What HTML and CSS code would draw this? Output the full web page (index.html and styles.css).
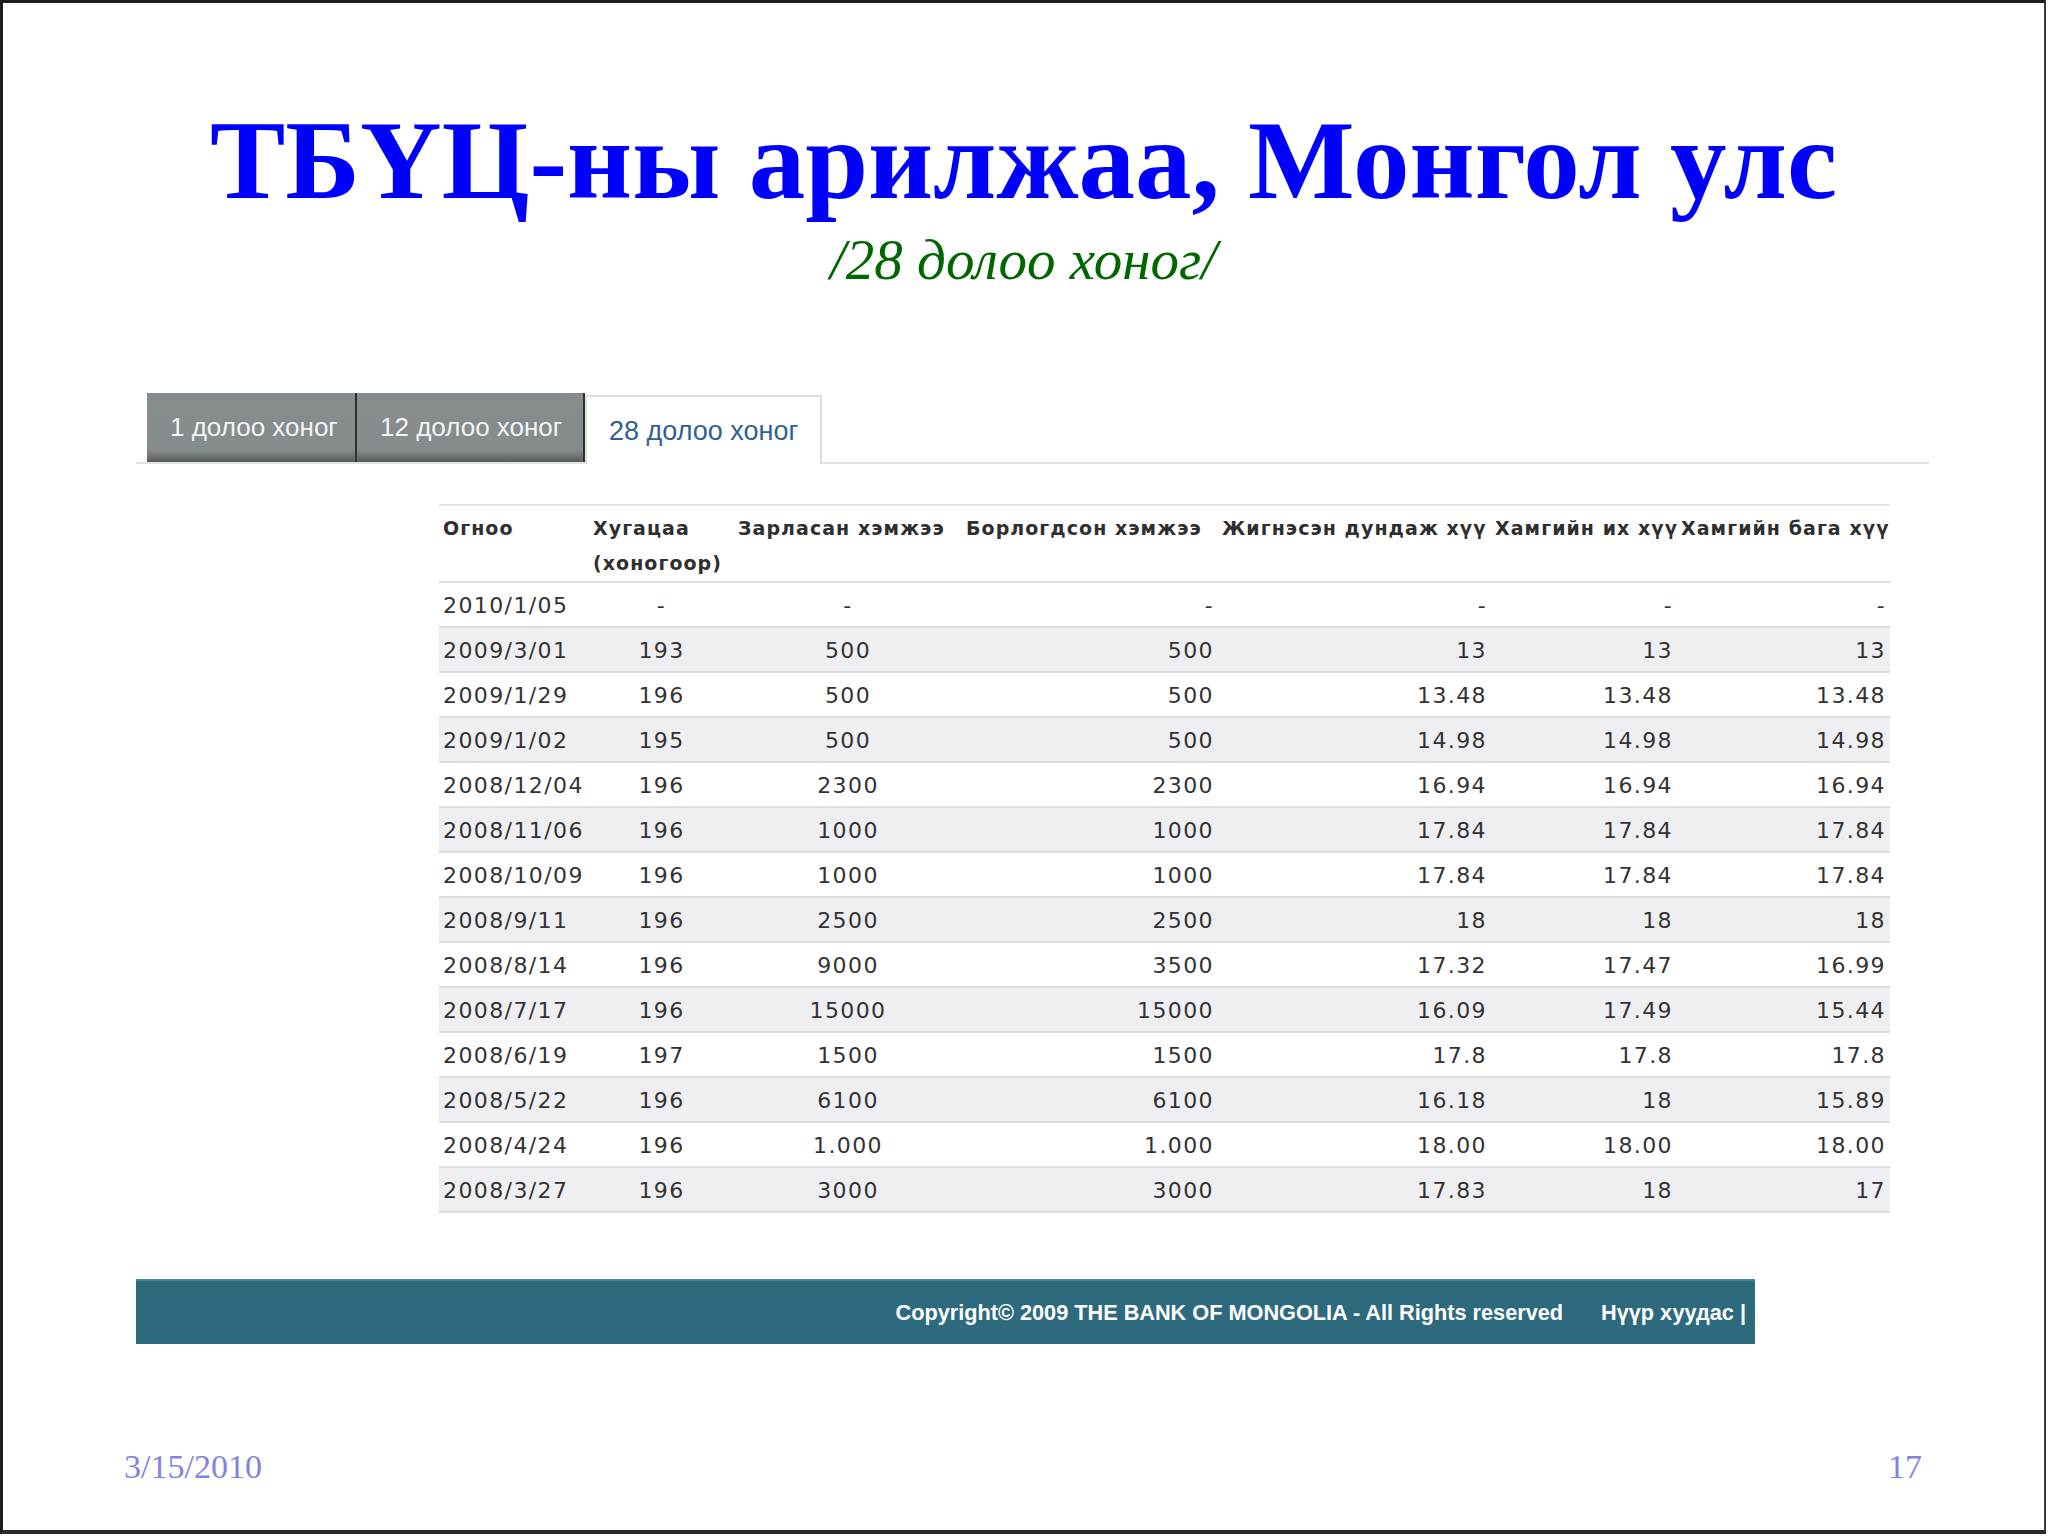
FILE: index.html
```html
<!DOCTYPE html>
<html lang="mn">
<head>
<meta charset="utf-8">
<title>ТБҮЦ-ны арилжаа, Монгол улс</title>
<link rel="stylesheet" href="styles.css">
</head>
<body>
<div class="slide">
  <h1 class="title">ТБҮЦ-ны арилжаа, Монгол улс</h1>
  <div class="subtitle">/28 долоо хоног/</div>

  <div class="content">
    <div class="tabs">
      <div class="tab">1 долоо хоног</div>
      <div class="tab">12 долоо хоног</div>
      <div class="tab active">28 долоо хоног</div>
    </div>

    <table class="data">
      <colgroup>
        <col class="c1"><col class="c2"><col class="c3"><col class="c4"><col class="c5"><col class="c6"><col class="c7">
      </colgroup>
      <thead>
        <tr>
          <th>Огноо</th>
          <th>Хугацаа<br>(хоногоор)</th>
          <th>Зарласан хэмжээ</th>
          <th>Борлогдсон хэмжээ</th>
          <th>Жигнэсэн дундаж хүү</th>
          <th>Хамгийн их хүү</th>
          <th>Хамгийн бага хүү</th>
        </tr>
      </thead>
      <tbody>
        <tr><td>2010/1/05</td><td class="ctr">-</td><td class="ctr">-</td><td class="r">-</td><td class="r">-</td><td class="r">-</td><td class="r">-</td></tr>
        <tr><td>2009/3/01</td><td class="ctr">193</td><td class="ctr">500</td><td class="r">500</td><td class="r">13</td><td class="r">13</td><td class="r">13</td></tr>
        <tr><td>2009/1/29</td><td class="ctr">196</td><td class="ctr">500</td><td class="r">500</td><td class="r">13.48</td><td class="r">13.48</td><td class="r">13.48</td></tr>
        <tr><td>2009/1/02</td><td class="ctr">195</td><td class="ctr">500</td><td class="r">500</td><td class="r">14.98</td><td class="r">14.98</td><td class="r">14.98</td></tr>
        <tr><td>2008/12/04</td><td class="ctr">196</td><td class="ctr">2300</td><td class="r">2300</td><td class="r">16.94</td><td class="r">16.94</td><td class="r">16.94</td></tr>
        <tr><td>2008/11/06</td><td class="ctr">196</td><td class="ctr">1000</td><td class="r">1000</td><td class="r">17.84</td><td class="r">17.84</td><td class="r">17.84</td></tr>
        <tr><td>2008/10/09</td><td class="ctr">196</td><td class="ctr">1000</td><td class="r">1000</td><td class="r">17.84</td><td class="r">17.84</td><td class="r">17.84</td></tr>
        <tr><td>2008/9/11</td><td class="ctr">196</td><td class="ctr">2500</td><td class="r">2500</td><td class="r">18</td><td class="r">18</td><td class="r">18</td></tr>
        <tr><td>2008/8/14</td><td class="ctr">196</td><td class="ctr">9000</td><td class="r">3500</td><td class="r">17.32</td><td class="r">17.47</td><td class="r">16.99</td></tr>
        <tr><td>2008/7/17</td><td class="ctr">196</td><td class="ctr">15000</td><td class="r">15000</td><td class="r">16.09</td><td class="r">17.49</td><td class="r">15.44</td></tr>
        <tr><td>2008/6/19</td><td class="ctr">197</td><td class="ctr">1500</td><td class="r">1500</td><td class="r">17.8</td><td class="r">17.8</td><td class="r">17.8</td></tr>
        <tr><td>2008/5/22</td><td class="ctr">196</td><td class="ctr">6100</td><td class="r">6100</td><td class="r">16.18</td><td class="r">18</td><td class="r">15.89</td></tr>
        <tr><td>2008/4/24</td><td class="ctr">196</td><td class="ctr">1.000</td><td class="r">1.000</td><td class="r">18.00</td><td class="r">18.00</td><td class="r">18.00</td></tr>
        <tr><td>2008/3/27</td><td class="ctr">196</td><td class="ctr">3000</td><td class="r">3000</td><td class="r">17.83</td><td class="r">18</td><td class="r">17</td></tr>
      </tbody>
    </table>

    <div class="bar">
      <span class="copy">Copyright© 2009 THE BANK OF MONGOLIA - All Rights reserved</span>
      <span class="home">Нүүр хуудас |</span>
    </div>
  </div>

  <div class="foot">
    <span class="date">3/15/2010</span>
    <span class="num">17</span>
  </div>
</div>
</body>
</html>
```

FILE: styles.css
```css
html, body {
  margin: 0;
  padding: 0;
  background: #ffffff;
}

.slide {
  box-sizing: border-box;
  width: 2046px;
  height: 1534px;
  border-top: 3px solid #1c1c1c;
  border-left: 3px solid #1c1c1c;
  border-bottom: 4px solid #2a2a2a;
  border-right: 2px solid #3a3a3a;
  padding-top: 100px;
  display: flex;
  flex-direction: column;
  background: #ffffff;
}

.title {
  margin: 0;
  font-family: "Liberation Serif", "Times New Roman", serif;
  font-weight: bold;
  font-size: 113px;
  line-height: 1;
  color: #0000ff;
  text-align: center;
  white-space: nowrap;
}

.subtitle {
  margin-top: 15px;
  font-family: "Liberation Serif", "Times New Roman", serif;
  font-style: italic;
  font-size: 57px;
  line-height: 1;
  color: #006600;
  text-align: center;
}

.content {
  margin-top: 105px;
  margin-left: 133px;
  width: 1793px;
  display: flex;
  flex-direction: column;
}

/* tabs */
.tabs {
  display: flex;
  align-items: flex-end;
  padding-left: 11px;
  height: 69px;
  border-bottom: 2px solid #e2e2e2;
}

.tab {
  box-sizing: border-box;
  height: 69px;
  display: flex;
  align-items: center;
  padding: 0 0 0 23px;
  font-family: "Liberation Sans", Arial, sans-serif;
  font-size: 26px;
  color: #f4f4f4;
  background: linear-gradient(to bottom, #878c8e 0%, #868b8d 82%, #6e7274 92%, #55595b 100%);
  border-right: 2px solid #2e3133;
  white-space: nowrap;
}

.tab:nth-child(1) { width: 210px; }
.tab:nth-child(2) { width: 228px; }

.tab.active {
  width: 237px;
  height: 69px;
  margin-bottom: -2px;
  background: #ffffff;
  color: #2f5f96;
  font-size: 27px;
  border: 2px solid #dedede;
  border-bottom: none;
  padding-top: 2px;
  padding-left: 22px;
}

/* table */
.data {
  margin-top: 40px;
  margin-left: 303px;
  width: 1451px;
  table-layout: fixed;
  border-collapse: collapse;
  font-family: "DejaVu Sans", Verdana, sans-serif;
  color: #333333;
}

.c1 { width: 150px; }
.c2 { width: 145px; }
.c3 { width: 228px; }
.c4 { width: 256px; }
.c5 { width: 273px; }
.c6 { width: 186px; }
.c7 { width: 213px; }

.data thead tr {
  border-top: 2px solid #e4e4e4;
  border-bottom: 2px solid #dcdcdc;
}

.data th {
  height: 74px;
  box-sizing: border-box;
  padding: 5px 2px 0 4px;
  vertical-align: top;
  text-align: left;
  font-size: 19px;
  font-weight: bold;
  letter-spacing: 1.05px;
  line-height: 35px;
  white-space: nowrap;
  overflow: visible;
  color: #2f2f2f;
}

.data tbody tr {
  border-bottom: 2px solid #dddde0;
}

.data tbody tr:nth-child(even) {
  background: #efeff2;
}

.data td {
  box-sizing: border-box;
  height: 45px;
  padding: 2px 4px 0 4px;
  font-size: 22px;
  line-height: 26px;
  letter-spacing: 1.4px;
  vertical-align: middle;
  white-space: nowrap;
}

.data td.ctr { text-align: center; }
.data td.r { text-align: right; }

/* footer bar */
.bar {
  margin-top: 66px;
  width: 1619px;
  height: 65px;
  box-sizing: border-box;
  background: #2e6a7e;
  border-top: 2px solid #4f8496;
  display: flex;
  align-items: center;
  justify-content: flex-end;
  padding-right: 9px;
  font-family: "Liberation Sans", Arial, sans-serif;
  font-weight: bold;
  font-size: 21.7px;
  color: #ffffff;
  gap: 38px;
}

/* slide footer */
.foot {
  margin-top: 106px;
  padding-left: 121px;
  padding-right: 122px;
  display: flex;
  justify-content: space-between;
  font-family: "Liberation Serif", "Times New Roman", serif;
  font-size: 34px;
  line-height: 1;
  color: #8282e2;
}
```
